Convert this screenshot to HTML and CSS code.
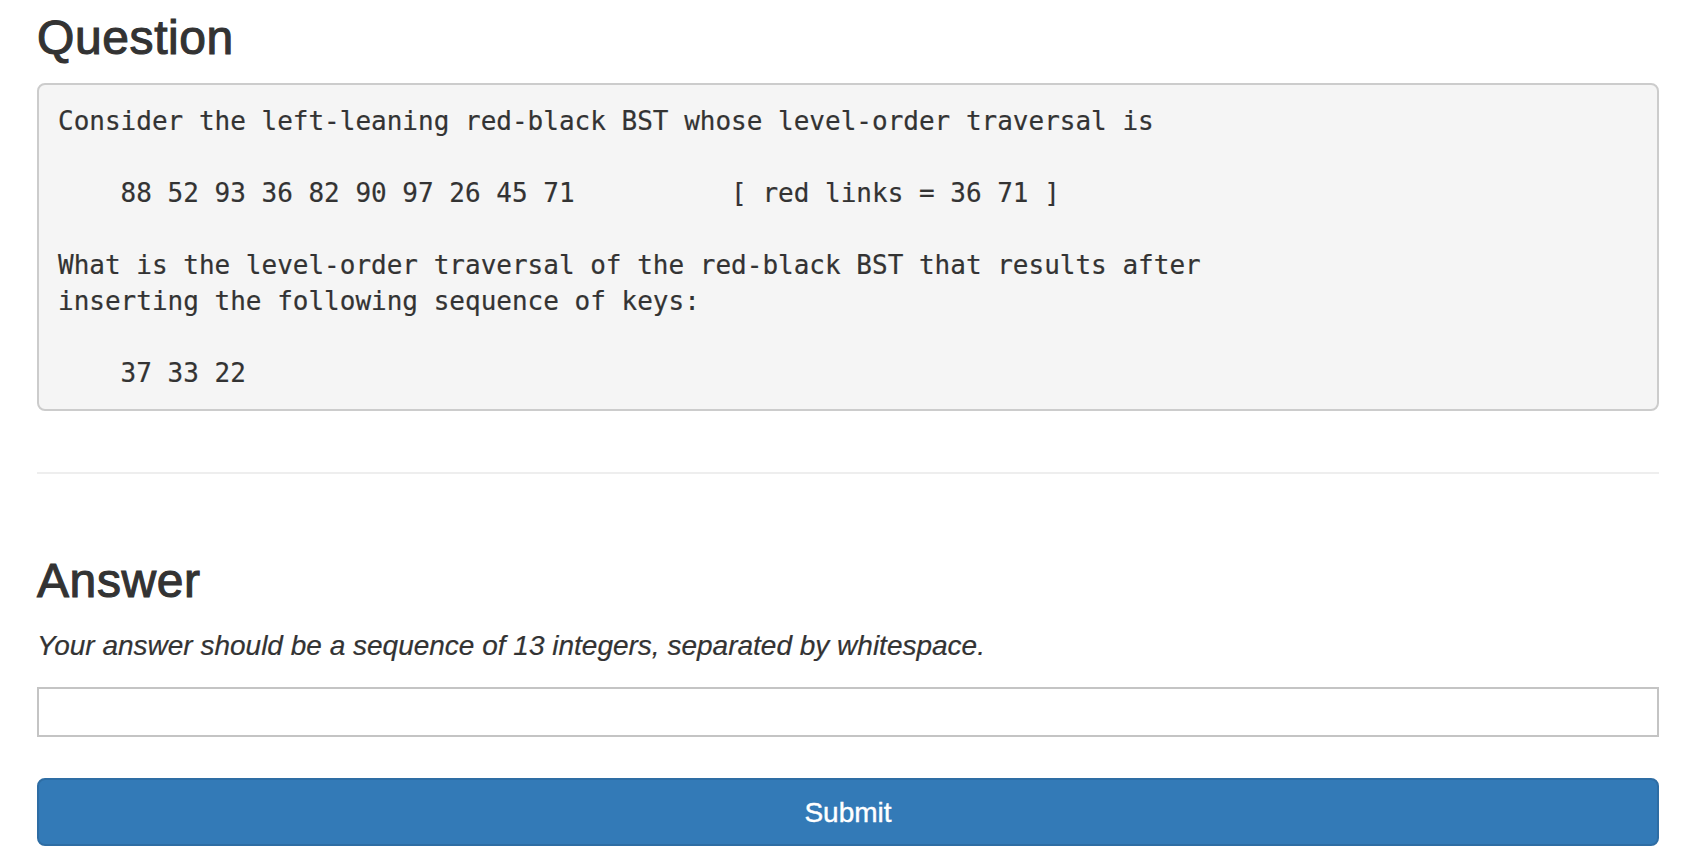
FILE: index.html
```html
<!DOCTYPE html>
<html lang="en">
<head>
<meta charset="utf-8">
<title>Question</title>
<link rel="stylesheet" href="styles.css">
</head>
<body>
<div class="container">
  <h3 class="heading heading-question">Question</h3>
  <pre class="question-box">Consider the left-leaning red-black BST whose level-order traversal is

    88 52 93 36 82 90 97 26 45 71          [ red links = 36 71 ]

What is the level-order traversal of the red-black BST that results after
inserting the following sequence of keys:

    37 33 22</pre>
  <div class="divider"></div>
  <h3 class="heading heading-answer">Answer</h3>
  <p class="hint">Your answer should be a sequence of 13 integers, separated by whitespace.</p>
  <form class="answer-form">
    <input class="answer-input" type="text" name="answer">
    <button class="submit-btn" type="button">Submit</button>
  </form>
</div>
</body>
</html>
```

FILE: styles.css
```css
html, body {
  margin: 0;
  padding: 0;
  background: #ffffff;
}

body {
  font-family: "Liberation Sans", Arial, Helvetica, sans-serif;
  font-size: 28px;
  line-height: 40px;
  color: #333333;
}

.container {
  padding: 12px 37px 0 37px;
}

.heading {
  font-family: "Liberation Sans", Arial, Helvetica, sans-serif;
  font-size: 48px;
  line-height: 52.8px;
  font-weight: 400;
  color: #333333;
  margin: 0;
  letter-spacing: 0.6px;
  -webkit-text-stroke: 1.1px #333333;
}

.heading-question {
  margin-bottom: 18px;
}

.question-box {
  margin: 0;
  padding: 18px 19px 18px 19px;
  background: #f5f5f5;
  border: 2px solid #cccccc;
  border-radius: 8px;
  font-family: "DejaVu Sans Mono", "Liberation Mono", monospace;
  font-size: 26px;
  line-height: 36px;
  color: #333333;
  white-space: pre;
  overflow: hidden;
  -webkit-text-stroke: 0.2px #333333;
}

.divider {
  margin-top: 61px;
  border-top: 2px solid #eeeeee;
}

.heading-answer {
  margin-top: 81px;
  margin-bottom: 18px;
}

.hint {
  margin: 0 0 21px 0;
  font-style: italic;
  font-size: 28px;
  line-height: 40px;
  color: #333333;
  -webkit-text-stroke: 0.2px #333333;
}

.answer-form {
  display: flex;
  flex-direction: column;
  gap: 41px;
  margin: 0;
}

.answer-input {
  display: block;
  box-sizing: border-box;
  width: 100%;
  height: 50px;
  margin: 0;
  padding: 0 12px;
  border: 2px solid #c4c4c4;
  border-radius: 0;
  background: #ffffff;
  font-family: "Liberation Sans", Arial, sans-serif;
  font-size: 28px;
  outline: none;
}

.submit-btn {
  display: block;
  box-sizing: border-box;
  width: 100%;
  margin: 0;
  padding: 13px 24px 11px 24px;
  font-family: "Liberation Sans", Arial, Helvetica, sans-serif;
  font-size: 28px;
  line-height: 40px;
  color: #ffffff;
  background: #337ab7;
  border: 2px solid #2e6da4;
  border-radius: 8px;
  cursor: pointer;
  -webkit-text-stroke: 0.4px #ffffff;
}
```
